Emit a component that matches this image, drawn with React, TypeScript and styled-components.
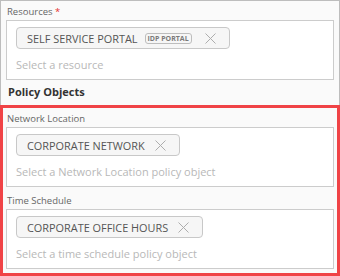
import React from "react";
import styled, { createGlobalStyle } from "styled-components";

const GlobalStyle = createGlobalStyle`
  html, body {
    margin: 0;
    padding: 0;
    background: #ffffff;
  }
  body {
    font-family: "Open Sans", "Noto Sans", sans-serif;
  }
`;

type Chip = { label: string; badge?: string };
type Field = { label: string; required?: boolean; chips: Chip[]; placeholder: string };

const resources: Field = {
  label: "Resources",
  required: true,
  chips: [{ label: "SELF SERVICE PORTAL", badge: "IDP PORTAL" }],
  placeholder: "Select a resource",
};

const policyFields: Field[] = [
  {
    label: "Network Location",
    chips: [{ label: "CORPORATE NETWORK" }],
    placeholder: "Select a Network Location policy object",
  },
  {
    label: "Time Schedule",
    chips: [{ label: "CORPORATE OFFICE HOURS" }],
    placeholder: "Select a time schedule policy object",
  },
];

const CloseIcon = () => (
  <svg width="11" height="11" viewBox="0 0 11 11" fill="none">
    <path d="M0.5 0.5 L10.5 10.5 M10.5 0.5 L0.5 10.5" stroke="#adadad" strokeWidth="1" />
  </svg>
);

const SelectField: React.FC<{ field: Field }> = ({ field }) => (
  <FieldWrap>
    <Label>
      {field.label}
      {field.required && <Required> *</Required>}
    </Label>
    <SelectBox>
      <ChipRow>
        {field.chips.map((c) => (
          <ChipStyled key={c.label}>
            <ChipText>{c.label}</ChipText>
            {c.badge && <Badge>{c.badge}</Badge>}
            <Remove>
              <CloseIcon />
            </Remove>
          </ChipStyled>
        ))}
      </ChipRow>
      <Placeholder>{field.placeholder}</Placeholder>
    </SelectBox>
  </FieldWrap>
);

export default function App() {
  return (
    <>
      <GlobalStyle />
      <Frame>
        <TopPart>
          <SelectField field={resources} />
          <SectionTitle>Policy Objects</SectionTitle>
        </TopPart>
        <Highlight>
          {policyFields.map((f) => (
            <SelectField key={f.label} field={f} />
          ))}
        </Highlight>
      </Frame>
    </>
  );
}

const Frame = styled.div`
  width: 340px;
  height: 276px;
  display: flex;
  flex-direction: column;
  background: #fafafa;
  overflow: hidden;
`;

const TopPart = styled.div`
  display: flex;
  flex-direction: column;
  border: 1px solid #bdbdbd;
  border-bottom: none;
  padding: 3px 5px 0;
  height: 105px;
  box-sizing: border-box;
`;

const Highlight = styled.div`
  flex: 1;
  display: flex;
  flex-direction: column;
  gap: 6px;
  border: 3px solid #f04346;
  padding: 3px 3px 0;
  background: #fafafa;
`;

const FieldWrap = styled.div`
  display: flex;
  flex-direction: column;
`;

const Label = styled.div`
  font-size: 9.5px;
  line-height: 15px;
  color: #666666;
  padding-left: 1px;
  margin-bottom: 1px;
`;

const Required = styled.span`
  color: #e5302f;
`;

const SelectBox = styled.div`
  background: #ffffff;
  border: 1px solid #cccccc;
  padding: 6px 9px 6px;
  display: flex;
  flex-direction: column;
  gap: 8px;
`;

const ChipRow = styled.div`
  display: flex;
  gap: 6px;
`;

const ChipStyled = styled.div`
  display: flex;
  align-items: center;
  height: 22px;
  box-sizing: border-box;
  border: 1px solid #c8c8c8;
  border-radius: 4px;
  background: #f6f6f6;
  padding: 0 13px 0 10px;
`;

const ChipText = styled.span`
  font-size: 10.9px;
  color: #555555;
  white-space: nowrap;
`;

const Badge = styled.span`
  margin: 0 3px 0 7px;
  font-size: 7px;
  font-weight: 700;
  color: #7a7a7a;
  border: 1px solid #bdbdbd;
  border-radius: 3px;
  padding: 0 2px;
  line-height: 9px;
`;

const Remove = styled.span`
  display: flex;
  margin-left: 10px;
`;

const Placeholder = styled.div`
  font-size: 11px;
  line-height: 16px;
  color: #b8b8b8;
`;

const SectionTitle = styled.div`
  margin-top: 4px;
  font-size: 11px;
  line-height: 16px;
  font-weight: 700;
  color: #333333;
  padding-left: 2px;
`;
